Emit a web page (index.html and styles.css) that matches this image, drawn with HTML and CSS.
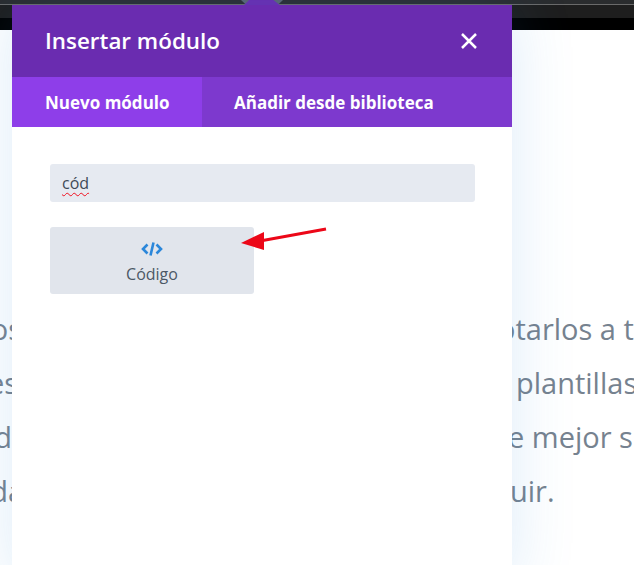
FILE: index.html
```html
<!DOCTYPE html>
<html lang="es">
<head>
<meta charset="utf-8">
<title>Insertar módulo</title>
<link rel="stylesheet" href="styles.css">
</head>
<body>
<div class="page">
  <div class="chrome">
    <div class="chrome-top"></div>
    <div class="chrome-mid"></div>
    <div class="chrome-black"></div>
  </div>
  <div class="article">
    <div class="line l1"><span class="lead">os</span><span class="tail">otarlos a tu</span></div>
    <div class="line l2"><span class="lead">es</span><span class="tail">plantillas</span></div>
    <div class="line l3"><span class="lead">d</span><span class="tail">e mejor su</span></div>
    <div class="line l4"><span class="lead">da</span><span class="tail">uir.</span></div>
  </div>
  <div class="notch-edge"></div>
  <div class="notch"></div>
  <section class="modal">
    <header class="modal-head">
      <h1>Insertar módulo</h1>
      <svg class="close" width="16" height="16" viewBox="0 0 16 16"><path d="M1 1L15 15M15 1L1 15"/></svg>
    </header>
    <nav class="tabs">
      <div class="tab active">Nuevo módulo</div>
      <div class="tab">Añadir desde biblioteca</div>
    </nav>
    <div class="modal-body">
      <div class="search"><span class="misspelled">cód</span></div>
      <div class="module">
        <svg class="code-icon" width="22" height="16" viewBox="0 0 22 16"><path d="M6.500 3.500L2 8l4.500 4.500M15.500 3.500L20 8l-4.500 4.500M12.500 1.500L9.500 14.500"/></svg>
        <span>Código</span>
      </div>
    </div>
  </section>
  <svg class="arrow" width="90" height="24" viewBox="0 0 90 24"><path class="arrow-line" d="M86 2L20 14"/><path class="arrow-head" d="M1 16L24 5L24 23Z"/></svg>
</div>
</body>
</html>
```

FILE: styles.css
```css
* { box-sizing: border-box; }
html, body { margin: 0; padding: 0; }
body { width: 634px; height: 565px; overflow: hidden; background: #fff; font-family: "Open Sans", "Noto Sans", sans-serif; }
.page { position: relative; width: 634px; height: 565px; overflow: hidden; background: #fff; }

.chrome { height: 30px; display: flex; flex-direction: column; }
.chrome-top { height: 5px; background: #2a2c2e; border-bottom: 1px solid #6a6a6a; }
.chrome-mid { height: 13px; background: #1e1e1e; }
.chrome-black { height: 12px; background: #000; }

.article { padding-top: 272px; color: #76828f; font-size: 29px; line-height: 54px; }
.line { display: flex; white-space: nowrap; }
.lead { flex: none; width: 40px; text-align: right; }
.tail { flex: none; }
.l1 .lead { margin-left: -18px; } .l1 .tail { margin-left: 476px; }
.l2 .lead { margin-left: -22px; } .l2 .tail { margin-left: 498px; }
.l3 .lead { margin-left: -28px; } .l3 .tail { margin-left: 496px; }
.l4 .lead { margin-left: -16px; } .l4 .tail { margin-left: 486px; }

.notch-edge { position: absolute; left: 241px; top: 0; width: 42px; height: 6px; background: #5b6570; clip-path: polygon(0 0, 100% 0, 85% 100%, 15% 100%); }
.notch { position: absolute; left: 243px; top: 0; width: 38px; height: 6px; background: #6a2cb0; clip-path: polygon(16% 0, 80% 0, 100% 100%, 0 100%); }

.modal { position: absolute; left: 12px; top: 5px; width: 500px; height: 580px; background: #fff; box-shadow: 0 0 60px rgba(43, 135, 218, .16); }
.modal-head { height: 72px; padding: 0 35px 2px 33px; background: #6a2cb0; display: flex; align-items: center; justify-content: space-between; }
.modal-head h1 { margin: 0; color: #fff; font-size: 22.4px; font-weight: 600; }
.close { margin-top: 2px; stroke: #fff; stroke-width: 2.5; fill: none; }
.tabs { display: flex; height: 50px; background: #7d39ce; }
.tab { padding: 0 32px; display: flex; align-items: center; color: #fff; font-size: 17px; font-weight: 700; white-space: nowrap; }
.tab.active { width: 190px; padding: 0 33px; background: #8e3ee9; }
.modal-body { padding: 37px 37px 0 38px; }
.search { height: 38px; padding: 0 12px; background: #e6eaf1; border-radius: 3px; display: flex; align-items: center; color: #3f4a57; font-size: 16px; font-weight: 500; }
.misspelled { text-decoration: underline wavy #f01020 1.2px; text-underline-offset: 3px; }
.module { margin-top: 25px; width: 204px; height: 67px; background: #e1e5ec; border-radius: 3px; display: flex; flex-direction: column; align-items: center; padding-top: 14px; gap: 6px; color: #4c5866; font-size: 16px; font-weight: 500; }
.code-icon { stroke: #2b87da; stroke-width: 2.6; fill: none; }

.arrow { position: absolute; left: 240px; top: 227px; }
.arrow-line { stroke: #ec0718; stroke-width: 3; fill: none; }
.arrow-head { fill: #ec0718; }
```
